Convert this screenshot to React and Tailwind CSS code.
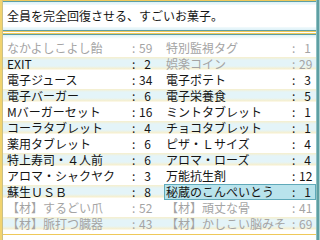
import React from 'react';

const left = [
    { name: 'なかよしこよし飴', count: 59, dim: true },
    { name: 'EXIT', count: 2 },
    { name: '電子ジュース', count: 34 },
    { name: '電子バーガー', count: 6 },
    { name: 'Mバーガーセット', count: 16 },
    { name: 'コーラタブレット', count: 4 },
    { name: '薬用タブレット', count: 6 },
    { name: '特上寿司・４人前', count: 6 },
    { name: 'アロマ・シャクヤク', count: 3 },
    { name: '蘇生ＵＳＢ', count: 8 },
    { name: '【材】するどい爪', count: 52, dim: true },
    { name: '【材】脈打つ臓器', count: 43, dim: true },
];

const right = [
    { name: '特別監視タグ', count: 1, dim: true },
    { name: '娯楽コイン', count: 29, dim: true },
    { name: '電子ポテト', count: 3 },
    { name: '電子栄養食', count: 5 },
    { name: 'ミントタブレット', count: 1 },
    { name: 'チョコタブレット', count: 1 },
    { name: 'ピザ・Ｌサイズ', count: 4 },
    { name: 'アロマ・ローズ', count: 4 },
    { name: '万能抗生剤', count: 12 },
    { name: '秘蔵のこんぺいとう', count: 1, selected: true },
    { name: '【材】頑丈な骨', count: 41, dim: true },
    { name: '【材】かしこい脳みそ', count: 69, dim: true },
];

function Cell({ item }) {
    return (
        <div
            className={`flex items-center h-[16px] ${item.dim ? 'text-[#a4a4a4]' : 'text-[#151515]'} ${
                item.selected ? 'bg-[#b9e3ec] border border-[#5fa9b9] -ml-[2px] pl-[1px] -mr-[5px] pr-[4px]' : ''
            }`}
        >
            <span className="flex-1 whitespace-nowrap overflow-visible">{item.name}</span>
            <span className="w-[8px] pl-[1px]">:</span>
            <span className="w-[12px] text-right">{item.count}</span>
        </div>
    );
}

function App() {
    return (
        <div
            className="w-[320px] h-[240px] bg-white flex overflow-hidden text-[12px] leading-[16px]"
            style={{ fontFamily: '"Noto Sans CJK JP", "Noto Sans", sans-serif' }}
        >
            {/* left frame */}
            <div className="w-[3px] h-full flex">
                <div className="w-[2px] bg-[#f1d36e]" />
                <div className="w-[1px] bg-[#c9c08a]" />
            </div>

            <div className="flex-1 flex flex-col">
                {/* help window */}
                <div className="h-[33px] flex flex-col">
                    <div className="h-[1px] bg-[#efc95a]" />
                    <div className="h-[1px] bg-[#5e9fa3]" />
                    <div className="h-[3px] bg-[linear-gradient(to_bottom,#dcf1f8,#f3fafc)]" />
                    <div className="flex-1 flex items-center pl-[4px] text-[#151515]">
                        全員を完全回復させる、すごいお菓子。
                    </div>
                    <div className="h-[3px] bg-[linear-gradient(to_bottom,#f3fafc,#dcf1f8)]" />
                    <div className="h-[1px] bg-[#5e9fa3]" />
                    <div className="h-[1px] bg-[#efc95a]" />
                    <div className="h-[1px]" />
                </div>

                {/* item window */}
                <div className="flex flex-col">
                    <div className="h-[1px] bg-[#efc95a]" />
                    <div className="h-[1px] bg-[#5e9fa3]" />
                    <div className="h-[5px] bg-[linear-gradient(to_bottom,#dcf1f8,#fff_4px)]" />
                    <div className="flex flex-col">
                        {left.map((item, i) => (
                            <div
                                key={i}
                                className={`grid grid-cols-[144px_145px] gap-x-[15px] pl-[4px] ${
                                    i % 2 === 1
                                        ? 'bg-[linear-gradient(to_bottom,#fff_0px,#fff_1px,#f7efcc_1px,#e4f4f8_4px,#e4f4f8_10px,#f7efcc_13px,#fff_14px,#fff_16px)]'
                                        : ''
                                }`}
                            >
                                <Cell item={item} />
                                <Cell item={right[i]} />
                            </div>
                        ))}
                    </div>
                    <div className="h-[2px]" />
                    <div className="h-[1px] bg-[#efc95a]" />
                </div>
            </div>

            {/* right frame */}
            <div className="w-[4px] h-full flex">
                <div className="w-[1px] bg-[#8fc0c2]" />
                <div className="w-[2px] bg-[#5e9fa3]" />
                <div className="w-[1px] bg-[#a9cfd0]" />
            </div>
        </div>
    );
}

export default App;
